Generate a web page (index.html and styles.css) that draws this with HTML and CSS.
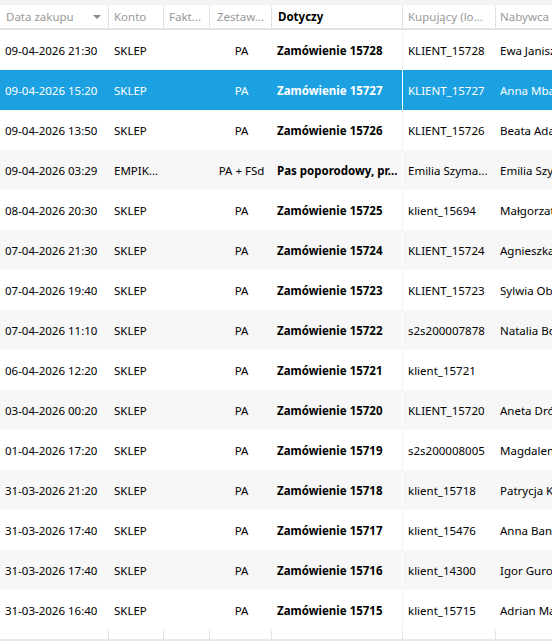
FILE: index.html
```html
<!DOCTYPE html>
<html lang="pl">
<head>
<meta charset="utf-8">
<link rel="stylesheet" href="styles.css">
</head>
<body>
<div class="grid">
  <div class="topstrip"></div>
  <div class="head">
    <div class="hc c1">Data zakupu<span class="sort"></span></div>
    <div class="hc c2 sep">Konto</div>
    <div class="hc c3 sep">Fakt...</div>
    <div class="hc c4 sep">Zestaw...</div>
    <div class="hc c5 sep active">Dotyczy</div>
    <div class="hc c6 sep">Kupujący (lo...</div>
    <div class="hc c7 sep">Nabywca</div>
  </div>
  <div class="body">
    <div class="row"><div class="c1">09-04-2026 21:30</div><div class="c2">SKLEP</div><div class="c3"></div><div class="c4 ctr">PA</div><div class="c5 b">Zamówienie 15728</div><div class="c6 div">KLIENT_15728</div><div class="c7">Ewa Janiszewska</div></div>
    <div class="row sel"><div class="c1">09-04-2026 15:20</div><div class="c2">SKLEP</div><div class="c3"></div><div class="c4 ctr">PA</div><div class="c5 b">Zamówienie 15727</div><div class="c6 div">KLIENT_15727</div><div class="c7">Anna Mbaye</div></div>
    <div class="row"><div class="c1">09-04-2026 13:50</div><div class="c2">SKLEP</div><div class="c3"></div><div class="c4 ctr">PA</div><div class="c5 b">Zamówienie 15726</div><div class="c6 div">KLIENT_15726</div><div class="c7">Beata Adamczyk</div></div>
    <div class="row alt"><div class="c1">09-04-2026 03:29</div><div class="c2">EMPIK...</div><div class="c3"></div><div class="c4 ctr">PA + FSd</div><div class="c5 b">Pas poporodowy, pr...</div><div class="c6 div">Emilia Szyma...</div><div class="c7">Emilia Szymańska</div></div>
    <div class="row"><div class="c1">08-04-2026 20:30</div><div class="c2">SKLEP</div><div class="c3"></div><div class="c4 ctr">PA</div><div class="c5 b">Zamówienie 15725</div><div class="c6 div">klient_15694</div><div class="c7">Małgorzata Nowak</div></div>
    <div class="row alt"><div class="c1">07-04-2026 21:30</div><div class="c2">SKLEP</div><div class="c3"></div><div class="c4 ctr">PA</div><div class="c5 b">Zamówienie 15724</div><div class="c6 div">KLIENT_15724</div><div class="c7">Agnieszka Wójcik</div></div>
    <div class="row"><div class="c1">07-04-2026 19:40</div><div class="c2">SKLEP</div><div class="c3"></div><div class="c4 ctr">PA</div><div class="c5 b">Zamówienie 15723</div><div class="c6 div">KLIENT_15723</div><div class="c7">Sylwia Obara</div></div>
    <div class="row alt"><div class="c1">07-04-2026 11:10</div><div class="c2">SKLEP</div><div class="c3"></div><div class="c4 ctr">PA</div><div class="c5 b">Zamówienie 15722</div><div class="c6 div">s2s200007878</div><div class="c7">Natalia Borkowska</div></div>
    <div class="row"><div class="c1">06-04-2026 12:20</div><div class="c2">SKLEP</div><div class="c3"></div><div class="c4 ctr">PA</div><div class="c5 b">Zamówienie 15721</div><div class="c6 div">klient_15721</div><div class="c7"></div></div>
    <div class="row alt"><div class="c1">03-04-2026 00:20</div><div class="c2">SKLEP</div><div class="c3"></div><div class="c4 ctr">PA</div><div class="c5 b">Zamówienie 15720</div><div class="c6 div">KLIENT_15720</div><div class="c7">Aneta Dróżdż</div></div>
    <div class="row"><div class="c1">01-04-2026 17:20</div><div class="c2">SKLEP</div><div class="c3"></div><div class="c4 ctr">PA</div><div class="c5 b">Zamówienie 15719</div><div class="c6 div">s2s200008005</div><div class="c7">Magdalena Kaczmarek</div></div>
    <div class="row alt"><div class="c1">31-03-2026 21:20</div><div class="c2">SKLEP</div><div class="c3"></div><div class="c4 ctr">PA</div><div class="c5 b">Zamówienie 15718</div><div class="c6 div">klient_15718</div><div class="c7">Patrycja Kowalska</div></div>
    <div class="row"><div class="c1">31-03-2026 17:40</div><div class="c2">SKLEP</div><div class="c3"></div><div class="c4 ctr">PA</div><div class="c5 b">Zamówienie 15717</div><div class="c6 div">klient_15476</div><div class="c7">Anna Banaś</div></div>
    <div class="row alt"><div class="c1">31-03-2026 17:40</div><div class="c2">SKLEP</div><div class="c3"></div><div class="c4 ctr">PA</div><div class="c5 b">Zamówienie 15716</div><div class="c6 div">klient_14300</div><div class="c7">Igor Gurowski</div></div>
    <div class="row"><div class="c1">31-03-2026 16:40</div><div class="c2">SKLEP</div><div class="c3"></div><div class="c4 ctr">PA</div><div class="c5 b">Zamówienie 15715</div><div class="c6 div">klient_15715</div><div class="c7">Adrian Majewski</div></div>
    <div class="filler"><div class="c1"></div><div class="c2 dl"></div><div class="c3 dl"></div><div class="c4 dl"></div><div class="c5 dl"></div><div class="c6 dl"></div><div class="c7 dl"></div></div>
  </div>
  <div class="bottom"></div>
</div>
</body>
</html>
```

FILE: styles.css
```css
html, body {
  margin: 0;
  padding: 0;
  background: #ffffff;
  overflow: hidden;
}
.grid {
  width: 552px;
  height: 641px;
  overflow: hidden;
  display: flex;
  flex-direction: column;
  font-family: "Noto Sans", "Open Sans", sans-serif;
  font-size: 11.5px;
  color: #000;
}
.topstrip {
  height: 5px;
  background: #f4f4f4;
  flex: none;
}
.head, .row, .filler {
  display: grid;
  grid-template-columns: 108px 55px 46px 62px 131px 93px 200px;
  width: 695px;
}
.head {
  height: 23px;
  border-bottom: 2px solid #e2e2e2;
  flex: none;
}
.hc {
  position: relative;
  display: flex;
  align-items: center;
  padding-left: 6px;
  color: #999999;
  white-space: nowrap;
  overflow: hidden;
}
.hc.sep {
  border-left: 1px dotted #c4c4c4;
  margin: 1px 0 1px;
  padding-left: 5px;
}
.hc.c4 { padding-left: 7px; }
.hc.c5 { padding-left: 6px; }
.hc.c7 { padding-left: 4px; }
.hc.active {
  color: #000;
  font-weight: 700;
}
.sort {
  margin-left: auto;
  margin-right: 7px;
  width: 0;
  height: 0;
  border-left: 4px solid transparent;
  border-right: 4px solid transparent;
  border-top: 4px solid #8a8a8a;
}
.body {
  flex: 1;
  display: flex;
  flex-direction: column;
}
.row {
  height: 40px;
  flex: none;
  background: #ffffff;
}
.row.alt { background: #f7f7f7; }
.row.sel { background: #1ba1e2; color: #ffffff; }
.row > div {
  display: flex;
  align-items: center;
  padding-left: 6px;
  white-space: nowrap;
  overflow: hidden;
}
.row > .c1 { padding-left: 5px; }
.row > .c5 { padding-left: 6px; }
.row > .ctr {
  justify-content: center;
  padding-left: 3px;
}
.row > .b { font-weight: 700; }
.row > .div {
  border-left: 1px solid #f2f2f2;
  padding-left: 5px;
}
.row.alt > .div, .row.sel > .div { border-left-color: #ffffff; }
.row > .c7 { padding-left: 5px; }
.filler {
  flex: 1;
}
.filler > .dl {
  border-left: 1px dotted #c8c8c8;
}
.bottom {
  height: 2px;
  background: #e8e8e8;
  flex: none;
}
```
